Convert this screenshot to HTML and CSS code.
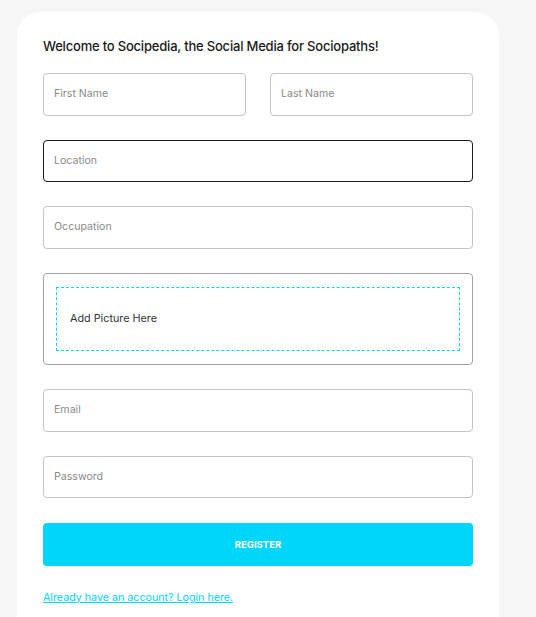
FILE: index.html
```html
<!DOCTYPE html>
<html lang="en">
<head>
<meta charset="utf-8">
<title>Sociopedia - Register</title>
<link rel="stylesheet" href="styles.css">
</head>
<body>
<main class="card">
  <h5 class="title">Welcome to Socipedia, the Social Media for Sociopaths!</h5>
  <form class="form">
    <div class="row-2">
      <input class="field" type="text" placeholder="First Name">
      <input class="field" type="text" placeholder="Last Name">
    </div>
    <input class="field field-active" type="text" placeholder="Location">
    <input class="field" type="text" placeholder="Occupation">
    <div class="picture-box">
      <div class="dropzone">Add Picture Here</div>
    </div>
    <input class="field" type="email" placeholder="Email">
    <input class="field" type="password" placeholder="Password">
    <button class="btn" type="button">REGISTER</button>
    <a class="link" href="#">Already have an account? Login here.</a>
  </form>
</main>
</body>
</html>
```
FILE: styles.css
```css
html, body {
  margin: 0;
  padding: 0;
}
body {
  background: #f6f6f6;
  font-family: "Inter", "Roboto", sans-serif;
  height: 617px;
  overflow: hidden;
}
.card {
  box-sizing: border-box;
  margin: 12px 0 0 17px;
  width: 482px;
  min-height: 640px;
  background: #ffffff;
  border-radius: 24px;
  padding: 26px 26px 0 26px;
}
.title {
  margin: 0 0 18px 0;
  font-size: 13px;
  line-height: 17px;
  font-weight: 500;
  color: #1a1a1a;
  letter-spacing: -0.2px;
}
.form {
  display: flex;
  flex-direction: column;
  gap: 24px;
}
.row-2 {
  display: grid;
  grid-template-columns: 1fr 1fr;
  gap: 24px;
}
.field {
  box-sizing: border-box;
  width: 100%;
  height: 42.5px;
  border: 1px solid #c4c4c4;
  border-radius: 4px;
  padding: 0 10px 1px 10px;
  font-family: inherit;
  font-size: 10.6px;
  color: #333;
  background: #fff;
  outline: none;
}
.field::placeholder {
  color: #8a8a8a;
  opacity: 1;
}
.field-active {
  border-color: #1a1a1a;
}
.picture-box {
  box-sizing: border-box;
  height: 92.5px;
  border: 1px solid #a3a3a3;
  border-radius: 4px;
  padding: 13px 12px;
}
.dropzone {
  box-sizing: border-box;
  height: 100%;
  border: 1px dashed #00d5fa;
  padding: 0 13px;
  display: flex;
  align-items: center;
  font-size: 10.8px;
  color: #333;
}
.btn {
  margin-top: 1px;
  height: 43px;
  border: none;
  border-radius: 4px;
  background: #00d5fa;
  color: #ffffff;
  font-family: inherit;
  font-size: 9.5px;
  font-weight: 700;
  letter-spacing: 0;
  cursor: pointer;
}
.link {
  align-self: flex-start;
  margin-top: 1px;
  font-size: 10.7px;
  color: #00d5fa;
  text-decoration: underline;
}
```
